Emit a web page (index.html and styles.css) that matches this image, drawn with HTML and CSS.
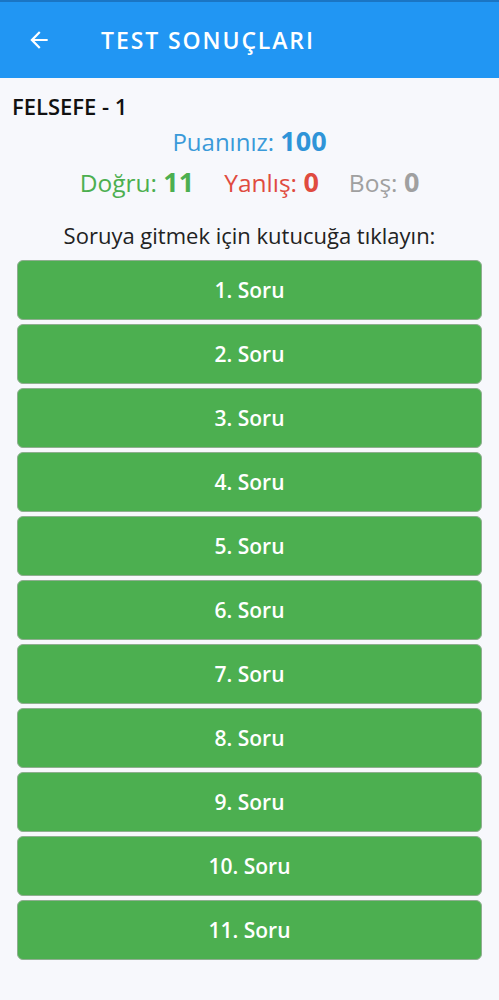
FILE: index.html
```html
<!DOCTYPE html>
<html lang="tr">
<head>
<meta charset="utf-8">
<title>Test Sonuçları</title>
<link rel="stylesheet" href="styles.css">
</head>
<body>
<header class="appbar">
  <svg class="back" viewBox="0 0 24 24" width="24" height="24"><path d="M20 11H7.83l5.59-5.59L12 4l-8 8 8 8 1.41-1.41L7.83 13H20v-2z" fill="#fff"/></svg>
  <h1 class="title">TEST SONUÇLARI</h1>
</header>
<main class="content">
  <div class="test-name">FELSEFE - 1</div>
  <div class="score">Puanınız: <b>100</b></div>
  <div class="stats">
    <span class="ok">Doğru: <b>11</b></span>
    <span class="bad">Yanlış: <b>0</b></span>
    <span class="empty">Boş: <b>0</b></span>
  </div>
  <p class="hint">Soruya gitmek için kutucuğa tıklayın:</p>
  <div class="list">
    <button class="q">1. Soru</button>
    <button class="q">2. Soru</button>
    <button class="q">3. Soru</button>
    <button class="q">4. Soru</button>
    <button class="q">5. Soru</button>
    <button class="q">6. Soru</button>
    <button class="q">7. Soru</button>
    <button class="q">8. Soru</button>
    <button class="q">9. Soru</button>
    <button class="q">10. Soru</button>
    <button class="q">11. Soru</button>
  </div>
</main>
</body>
</html>
```
FILE: styles.css
```css
* { box-sizing: border-box; }
html, body { margin: 0; padding: 0; }
body {
  background: #f7f8fc;
  font-family: "Open Sans", "Noto Sans", sans-serif;
  color: #111;
  width: 499px;
  min-height: 1000px;
}
.appbar {
  height: 78px;
  background: #2196f3;
  border-top: 2px solid #1a75c4;
  display: flex;
  align-items: center;
  padding-left: 26px;
}
.back { width: 26px; height: 26px; }
.title {
  margin: 0 0 0 49px;
  color: #fff;
  font-size: 23px;
  font-weight: 600;
  letter-spacing: 1.9px;
}
.content { padding: 14px 17px 0 17px; }
.test-name {
  margin-left: -5px;
  font-size: 22px;
  font-weight: 600;
  line-height: 28px;
}
.score {
  text-align: center;
  color: #3a9ad9;
  font-size: 24px;
  line-height: 34px;
  margin-top: 4px;
}
.score b { font-weight: 700; font-size: 27px; color: #2f94d8; }
.stats {
  display: flex;
  justify-content: center;
  gap: 30px;
  font-size: 24.5px;
  line-height: 34px;
  margin-top: 6px;
}
.stats b { font-size: 27px; font-weight: 700; }
.ok { color: #4caf50; }
.bad { color: #e04b3f; }
.empty { color: #a0a0a0; }
.hint {
  text-align: center;
  margin: 21px 0 11px;
  font-size: 22px;
  line-height: 28px;
  color: #222;
}
.list { display: flex; flex-direction: column; gap: 4px; }
.q {
  height: 60px;
  background: #4caf50;
  border: 1px solid #8fae90;
  border-radius: 6px;
  color: #fff;
  font-family: inherit;
  font-size: 21px;
  font-weight: 600;
}
```
